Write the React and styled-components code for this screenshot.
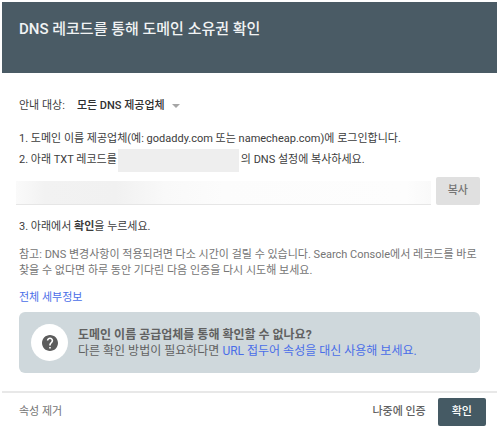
import React from 'react'
import styled, { createGlobalStyle } from 'styled-components'

const App = () => {
  return (
    <>
      <GlobalStyle />
      <Dialog>
        <Header>
          <Title>DNS 레코드를 통해 도메인 소유권 확인</Title>
        </Header>
        <Content>
          <ProviderRow>
            <label htmlFor="provider">안내 대상:</label>
            <SelectWrapper>
              <Select id="provider" defaultValue="any">
                <option value="any">모든 DNS 제공업체</option>
              </Select>
              <Arrow viewBox="0 0 8 4" aria-hidden="true">
                <path d="M0 0h8L4 4z" fill="#a6a6a6" />
              </Arrow>
            </SelectWrapper>
          </ProviderRow>
          <Steps>
            <Step>1. 도메인 이름 제공업체(예: godaddy.com 또는 namecheap.com)에 로그인합니다.</Step>
            <Step>
              2. 아래 TXT 레코드를
              <HiddenDomain />의 DNS 설정에 복사하세요.
            </Step>
          </Steps>
          <RecordRow>
            <RecordInput type="text" aria-label="TXT" readOnly />
            <Button $variant="grey" type="button">복사</Button>
          </RecordRow>
          <Step as="p">
            3. 아래에서 <strong>확인</strong>을 누르세요.
          </Step>
          <Note>
            참고: DNS 변경사항이 적용되려면 다소 시간이 걸릴 수 있습니다. Search Console에서 레코드를 바로
            찾을 수 없다면 하루 동안 기다린 다음 인증을 다시 시도해 보세요.
          </Note>
          <Details>
            <Link href="#details">전체 세부정보</Link>
          </Details>
          <Help>
            <HelpCircle>
              <HelpIcon viewBox="2 2 20 20" aria-hidden="true">
                <path
                  fill="#5c5c5c"
                  d="M12 2C6.48 2 2 6.48 2 12s4.48 10 10 10 10-4.48 10-10S17.52 2 12 2zm1 17h-2v-2h2v2zm2.07-7.75l-.9.92C13.45 12.9 13 13.5 13 15h-2v-.5c0-1.1.45-2.1 1.17-2.83l1.24-1.26c.37-.36.59-.86.59-1.41 0-1.1-.9-2-2-2s-2 .9-2 2H8c0-2.21 1.79-4 4-4s4 1.79 4 4c0 .88-.36 1.68-.93 2.25z"
                />
              </HelpIcon>
            </HelpCircle>
            <div>
              <HelpTitle>도메인 이름 공급업체를 통해 확인할 수 없나요?</HelpTitle>
              <p>
                다른 확인 방법이 필요하다면 <Link href="#prefix">URL 접두어 속성을 대신 사용해 보세요.</Link>
              </p>
            </div>
          </Help>
        </Content>
        <Footer>
          <TextButton type="button">속성 제거</TextButton>
          <Actions>
            <TextButton $strong type="button">나중에 인증</TextButton>
            <Button $variant="dark" type="button">확인</Button>
          </Actions>
        </Footer>
      </Dialog>
    </>
  )
}

const GlobalStyle = createGlobalStyle`
  * {
    box-sizing: border-box;
    margin: 0;
    padding: 0;
  }

  body {
    background: #fff;
    color: #3c3c3c;
    font-family: Roboto, 'Noto Sans CJK KR', sans-serif;
    font-size: 11px;
    line-height: 16px;
    word-break: keep-all;
  }

  button,
  input,
  select {
    font: inherit;
    color: inherit;
    border: 0;
  }
`

const Dialog = styled.main`
  padding: 2px 3px 2px 2px;
`

const Header = styled.header`
  min-height: 71px;
  padding: 16px 17px;
  background: #4a5b65;
  color: #f1f3f4;
`

const Title = styled.h1`
  font-size: 15px;
  font-weight: 500;
  line-height: 22px;
`

const Content = styled.section`
  padding: 25px 17px 18px;
`

const ProviderRow = styled.div`
  display: flex;
  align-items: center;
  gap: 12px;
`

const SelectWrapper = styled.div`
  display: flex;
  align-items: center;
  gap: 7px;
`

const Select = styled.select`
  appearance: none;
  background: transparent;
  color: #303030;
  font-weight: 500;
`

const Arrow = styled.svg`
  width: 8px;
  height: 4px;
`

const Steps = styled.ol`
  margin-top: 14px;
  list-style: none;
`

const Step = styled.li`
  line-height: 21px;

  strong {
    font-weight: 700;
  }
`

const HiddenDomain = styled.span`
  display: inline-block;
  width: 121px;
  height: 23px;
  margin: 0 2px 0 1px;
  background: #eee;
  vertical-align: middle;
`

const RecordRow = styled.div`
  display: flex;
  align-items: flex-end;
  gap: 5px;
  margin: 5px 0 11px -3px;
`

const RecordInput = styled.input`
  flex: 1;
  min-width: 0;
  height: 24px;
  border-bottom: 1px solid #e6e6e6;
  background: linear-gradient(90deg, #fafafa, #f2f2f2 7%, #f1f1f1 24%, #f9f9f9 36%, #fcfcfc 50%, #fdfdfd 94%, #f9f9f9);
`

const Button = styled.button`
  height: 28px;
  padding: ${({ $variant }) => ($variant === 'dark' ? '0 14px' : '0 12px')};
  border-radius: 2px;
  background: ${({ $variant }) => ($variant === 'dark' ? '#455a64' : '#e0e0e0')};
  color: ${({ $variant }) => ($variant === 'dark' ? '#fff' : '#757575')};
  font-weight: 500;
`

const Note = styled.p`
  margin-top: 10px;
  color: #757575;
`

const Details = styled.p`
  margin-top: 11px;
`

const Link = styled.a`
  color: #4a6ee8;
  text-decoration: none;
`

const Help = styled.aside`
  display: flex;
  align-items: center;
  gap: 10px;
  min-height: 61px;
  margin-top: 6px;
  padding: 12px;
  border-radius: 6px;
  background: #cfd8dc;
  color: #616161;
  font-size: 12px;
`

const HelpCircle = styled.div`
  display: flex;
  flex-shrink: 0;
  align-items: center;
  justify-content: center;
  width: 37px;
  height: 37px;
  border-radius: 50%;
  background: #fff;
`

const HelpIcon = styled.svg`
  width: 16px;
  height: 16px;
`

const HelpTitle = styled.p`
  font-weight: 700;
`

const Footer = styled.footer`
  display: flex;
  align-items: center;
  justify-content: space-between;
  padding: 5px 11px 6px 17px;
  border-top: 2px solid #e8e8e8;
`

const Actions = styled.div`
  display: flex;
  align-items: center;
  gap: 12px;
`

const TextButton = styled.button`
  background: transparent;
  color: ${({ $strong }) => ($strong ? '#616161' : '#757575')};
  font-weight: ${({ $strong }) => ($strong ? 500 : 400)};
`

export default App
